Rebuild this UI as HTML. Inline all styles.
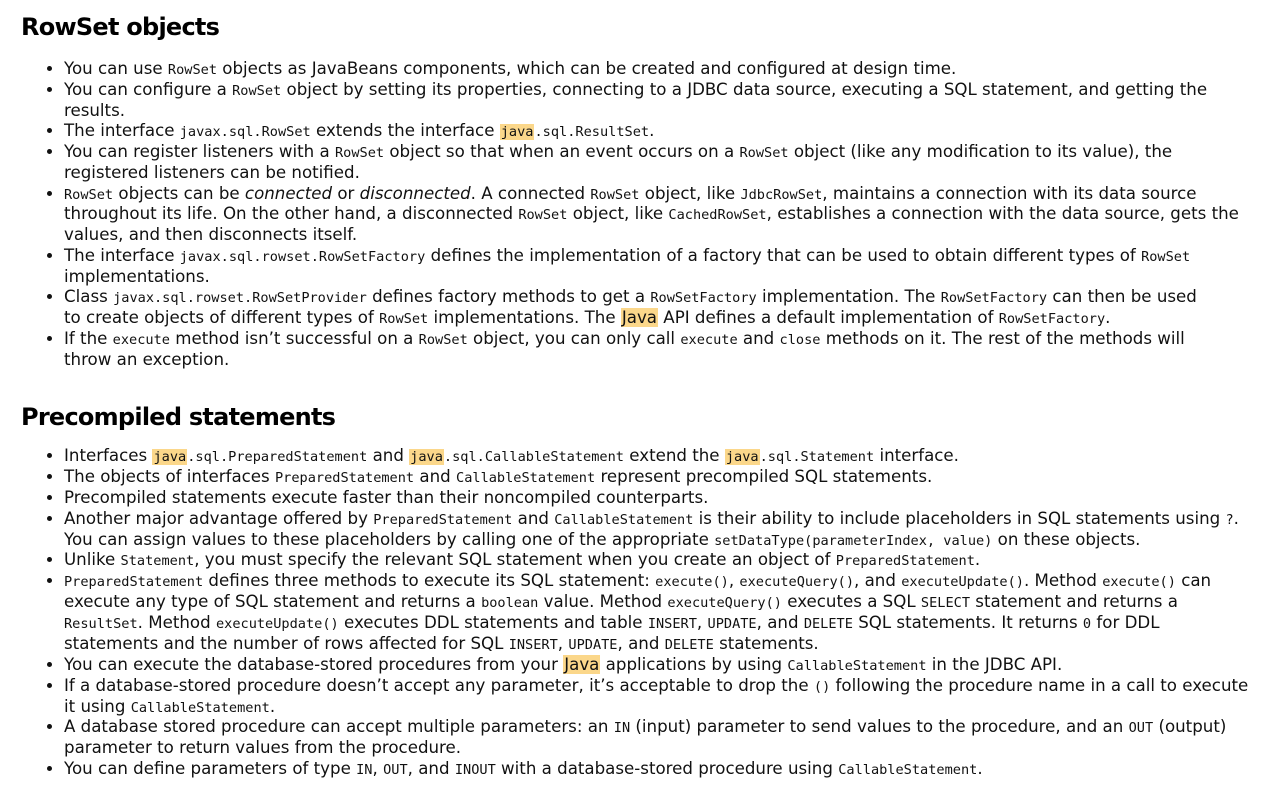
<!DOCTYPE html>
<html><head><meta charset="utf-8"><style>
html,body{margin:0;padding:0;background:#fff;}
body{font-family:"DejaVu Sans","Liberation Sans",sans-serif;font-size:16.65px;line-height:20.75px;color:#111;width:1284px;height:809px;overflow:hidden;}
h2{font-family:"DejaVu Sans",sans-serif;font-weight:bold;font-size:24px;letter-spacing:-0.75px;margin:0;padding-left:21px;line-height:28px;color:#000;}
ul{margin:0;padding-left:64px;padding-right:0;width:1190px;}
li{margin:0;line-height:20.75px;}
#u2 li{line-height:20.87px;}
code{font-family:"DejaVu Sans Mono","Liberation Mono",monospace;font-size:13.6px;line-height:10px;}
mark{background:#fbd78a;color:inherit;padding:0 1px;}
#h1{position:absolute;top:13px;}
#u1{position:absolute;top:59px;}
#h2{position:absolute;top:403px;}
#u2{position:absolute;top:446px;}
</style></head><body>
<h2 id="h1">RowSet objects</h2>
<ul id="u1">
<li>You can use <code>RowSet</code> objects as JavaBeans components, which can be created and configured at design time.</li>
<li>You can configure a <code>RowSet</code> object by setting its properties, connecting to a JDBC data source, executing a SQL statement, and getting the results.</li>
<li>The interface <code>javax.sql.RowSet</code> extends the interface <code><mark>java</mark>.sql.ResultSet</code>.</li>
<li>You can register listeners with a <code>RowSet</code> object so that when an event occurs on a <code>RowSet</code> object (like any modification to its value), the registered listeners can be notified.</li>
<li><code>RowSet</code> objects can be <i>connected</i> or <i>disconnected</i>. A connected <code>RowSet</code> object, like <code>JdbcRowSet</code>, maintains a connection with its data source throughout its life. On the other hand, a disconnected <code>RowSet</code> object, like <code>CachedRowSet</code>, establishes a connection with the data source, gets the values, and then disconnects itself.</li>
<li>The interface <code>javax.sql.rowset.RowSetFactory</code> defines the implementation of a factory that can be used to obtain different types of <code>RowSet</code> implementations.</li>
<li>Class <code>javax.sql.rowset.RowSetProvider</code> defines factory methods to get a <code>RowSetFactory</code> implementation. The <code>RowSetFactory</code> can then be used<br>to create objects of different types of <code>RowSet</code> implementations. The <mark>Java</mark> API defines a default implementation of <code>RowSetFactory</code>.</li>
<li>If the <code>execute</code> method isn’t successful on a <code>RowSet</code> object, you can only call <code>execute</code> and <code>close</code> methods on it. The rest of the methods will<br>throw an exception.</li>
</ul>
<h2 id="h2">Precompiled statements</h2>
<ul id="u2">
<li>Interfaces <code><mark>java</mark>.sql.PreparedStatement</code> and <code><mark>java</mark>.sql.CallableStatement</code> extend the <code><mark>java</mark>.sql.Statement</code> interface.</li>
<li>The objects of interfaces <code>PreparedStatement</code> and <code>CallableStatement</code> represent precompiled SQL statements.</li>
<li>Precompiled statements execute faster than their noncompiled counterparts.</li>
<li>Another major advantage offered by <code>PreparedStatement</code> and <code>CallableStatement</code> is their ability to include placeholders in SQL statements using <code>?</code>. You can assign values to these placeholders by calling one of the appropriate <code>setDataType(parameterIndex, value)</code> on these objects.</li>
<li>Unlike <code>Statement</code>, you must specify the relevant SQL statement when you create an object of <code>PreparedStatement</code>.</li>
<li><code>PreparedStatement</code> defines three methods to execute its SQL statement: <code>execute()</code>, <code>executeQuery()</code>, and <code>executeUpdate()</code>. Method <code>execute()</code> can execute any type of SQL statement and returns a <code>boolean</code> value. Method <code>executeQuery()</code> executes a SQL <code>SELECT</code> statement and returns a <code>ResultSet</code>. Method <code>executeUpdate()</code> executes DDL statements and table <code>INSERT</code>, <code>UPDATE</code>, and <code>DELETE</code> SQL statements. It returns <code>0</code> for DDL statements and the number of rows affected for SQL <code>INSERT</code>, <code>UPDATE</code>, and <code>DELETE</code> statements.</li>
<li>You can execute the database-stored procedures from your <mark>Java</mark> applications by using <code>CallableStatement</code> in the JDBC API.</li>
<li>If a database-stored procedure doesn’t accept any parameter, it’s acceptable to drop the <code>()</code> following the procedure name in a call to execute it using <code>CallableStatement</code>.</li>
<li>A database stored procedure can accept multiple parameters: an <code>IN</code> (input) parameter to send values to the procedure, and an <code>OUT</code> (output) parameter to return values from the procedure.</li>
<li>You can define parameters of type <code>IN</code>, <code>OUT</code>, and <code>INOUT</code> with a database-stored procedure using <code>CallableStatement</code>.</li>
</ul>
</body></html>
